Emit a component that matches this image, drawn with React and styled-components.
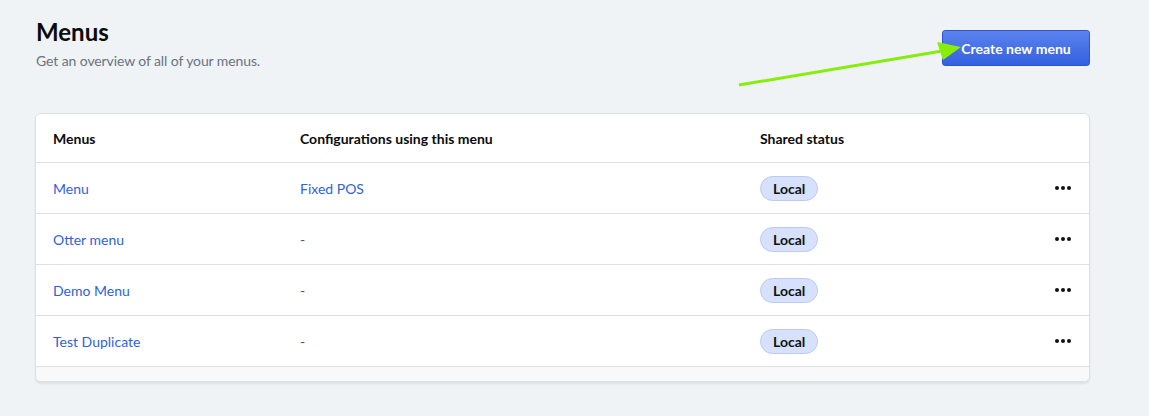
import React from 'react';
import styled, { createGlobalStyle } from 'styled-components';

const GlobalStyle = createGlobalStyle`
  body {
    margin: 0;
    background: #f0f3f6;
    font-family: Lato, 'Liberation Sans', sans-serif;
    color: #111;
  }
`;

const menus = [
  { name: 'Menu', config: 'Fixed POS' },
  { name: 'Otter menu', config: null },
  { name: 'Demo Menu', config: null },
  { name: 'Test Duplicate', config: null },
];

const App = () => {
  return (
    <Page>
      <GlobalStyle />
      <Header>
        <div>
          <Title>Menus</Title>
          <Subtitle>Get an overview of all of your menus.</Subtitle>
        </div>
        <CreateButton>Create new menu</CreateButton>
      </Header>

      <Card>
        <Row $head>
          <HeadCell>Menus</HeadCell>
          <HeadCell>Configurations using this menu</HeadCell>
          <HeadCell>Shared status</HeadCell>
          <span />
        </Row>
        {menus.map((m) => (
          <Row key={m.name}>
            <Link>{m.name}</Link>
            {m.config ? <Link>{m.config}</Link> : <Muted>-</Muted>}
            <div>
              <Badge>Local</Badge>
            </div>
            <Dots>
              <i />
              <i />
              <i />
            </Dots>
          </Row>
        ))}
        <CardFooter />
      </Card>

      <Arrow width='240' height='60' viewBox='0 0 240 60'>
        <line x1='2' y1='47' x2='205' y2='13' stroke='#86ee0a' strokeWidth='3' />
        <polygon points='224,9 200,4 206,22' fill='#86ee0a' />
      </Arrow>
    </Page>
  );
};

const Page = styled.div`
  position: relative;
  padding: 18px 59px 0 35px;
  min-height: 416px;
  box-sizing: border-box;
`;

const Header = styled.div`
  display: flex;
  justify-content: space-between;
  align-items: flex-start;
  height: 95px;
`;

const Title = styled.h1`
  margin: 0 0 0 1px;
  font-size: 24px;
  font-weight: 700;
  line-height: 28px;
  color: #0b0b0b;
`;

const Subtitle = styled.p`
  margin: 6px 0 0 1px;
  font-size: 14px;
  color: #6b7280;
  letter-spacing: -0.1px;
`;

const CreateButton = styled.button`
  margin-top: 12px;
  width: 148px;
  height: 36px;
  border: 1px solid #2c55cf;
  border-radius: 3px;
  background: linear-gradient(#5b83ee, #3360de);
  color: #fff;
  font-family: Lato, 'Liberation Sans', sans-serif;
  font-size: 14px;
  font-weight: 700;
  padding: 0;
  cursor: pointer;
`;

const Card = styled.div`
  background: #fff;
  border: 1px solid #dde1e6;
  border-radius: 6px;
  overflow: hidden;
  box-shadow: 0 2px 2px rgba(0, 0, 0, 0.08);
`;

const Row = styled.div`
  display: grid;
  grid-template-columns: 247px 460px 1fr 34px;
  align-items: center;
  height: ${({ $head }) => ($head ? '48px' : '50px')};
  padding: 0 0 0 17px;
  border-bottom: 1px solid #dcdfe3;
  font-size: 14px;
`;

const HeadCell = styled.span`
  font-weight: 700;
  color: #0b0b0b;
`;

const Link = styled.a`
  color: #2e62dc;
  cursor: pointer;
`;

const Muted = styled.span`
  color: #555;
`;

const Badge = styled.span`
  display: inline-flex;
  align-items: center;
  box-sizing: border-box;
  height: 25px;
  padding: 0 12px;
  border: 1px solid #bccbf6;
  border-radius: 13px;
  background: #d7e1fb;
  font-weight: 700;
  font-size: 14px;
  color: #111;
`;

const Dots = styled.div`
  display: flex;
  gap: 2px;
  i {
    width: 4px;
    height: 4px;
    border-radius: 50%;
    background: #111;
  }
`;

const CardFooter = styled.div`
  height: 14px;
  background: #f9f9f9;
`;

const Arrow = styled.svg`
  position: absolute;
  left: 737px;
  top: 38px;
`;

export default App;
